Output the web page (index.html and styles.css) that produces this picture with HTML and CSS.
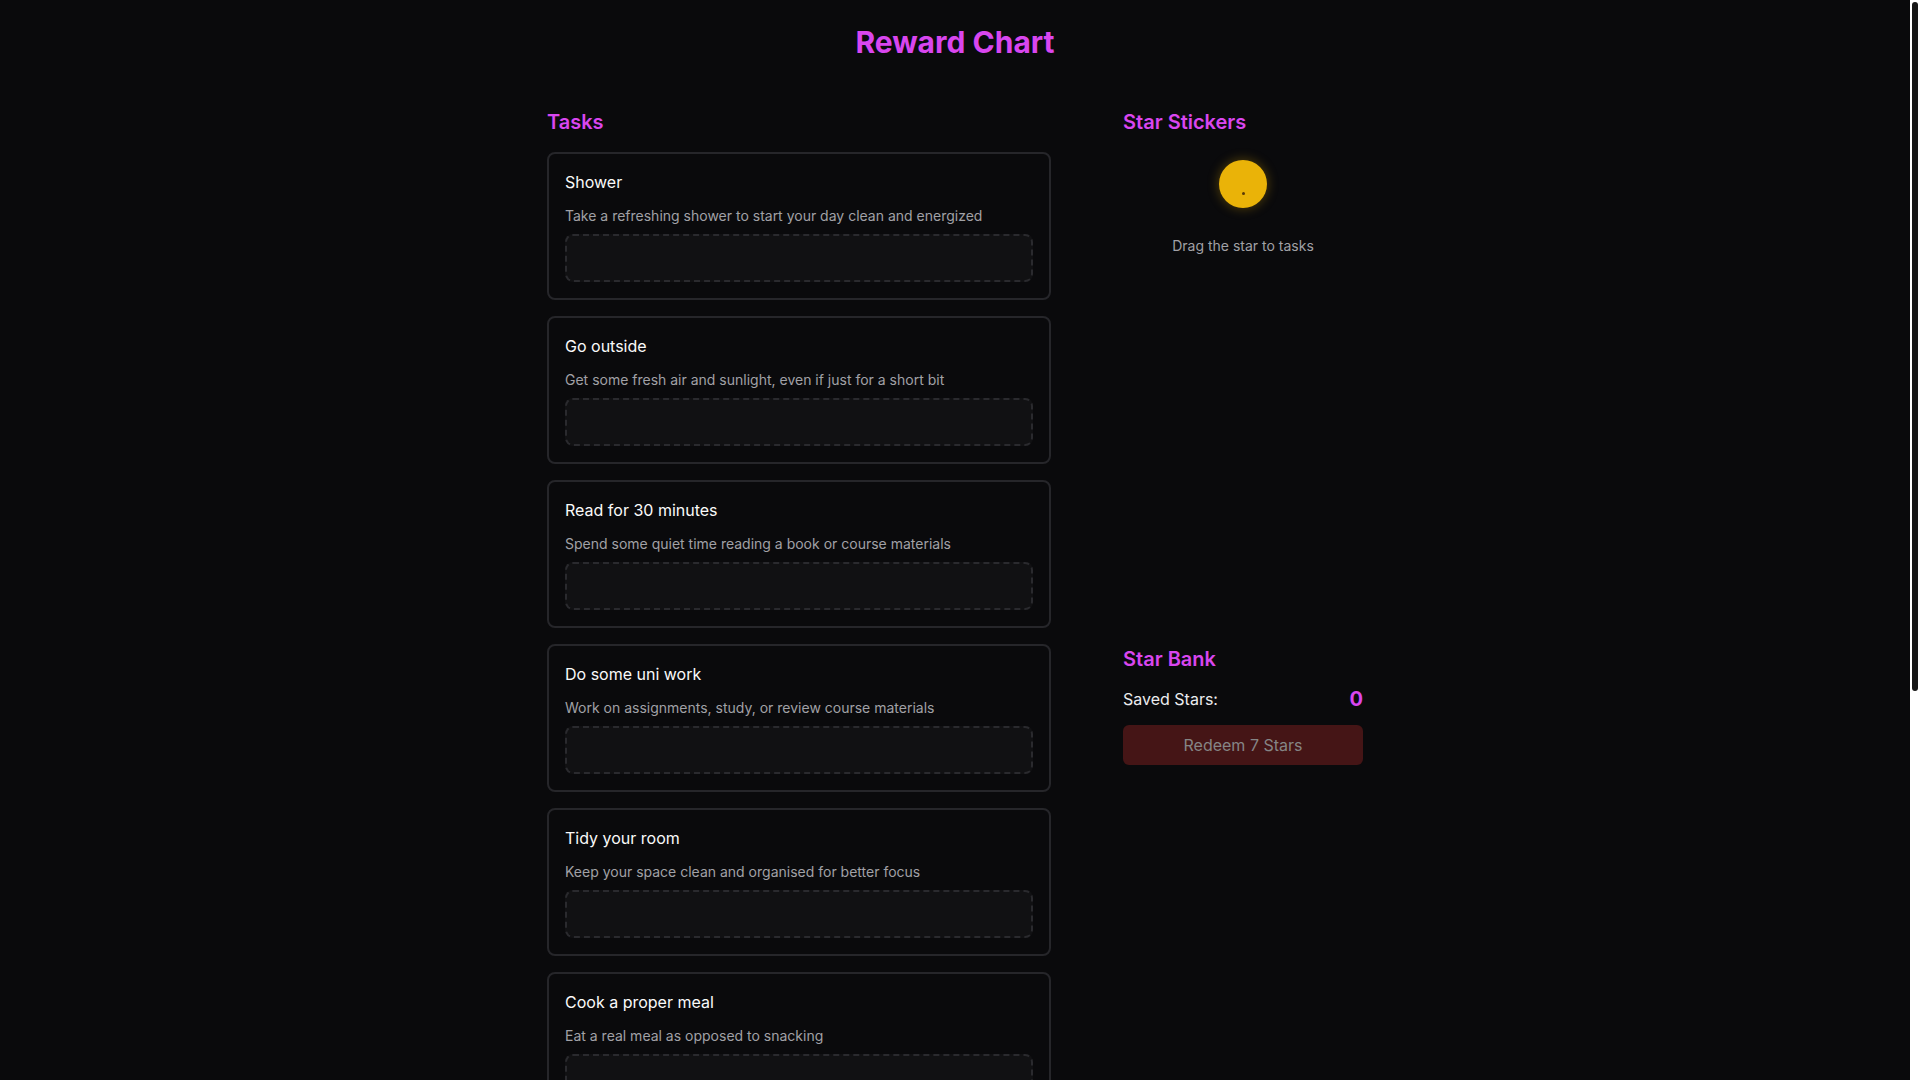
FILE: index.html
```html
<!DOCTYPE html>
<html lang="en">
<head>
<meta charset="utf-8">
<title>Reward Chart</title>
<link rel="stylesheet" href="styles.css">
</head>
<body>
<div class="page">
  <h1 class="page-title">Reward Chart</h1>
  <div class="layout">
    <section class="tasks">
      <h2 class="section-title">Tasks</h2>
      <div class="task-list">
        <div class="task-card">
          <h3 class="task-name">Shower</h3>
          <p class="task-desc">Take a refreshing shower to start your day clean and energized</p>
          <div class="drop-zone"></div>
        </div>
        <div class="task-card">
          <h3 class="task-name">Go outside</h3>
          <p class="task-desc">Get some fresh air and sunlight, even if just for a short bit</p>
          <div class="drop-zone"></div>
        </div>
        <div class="task-card">
          <h3 class="task-name">Read for 30 minutes</h3>
          <p class="task-desc">Spend some quiet time reading a book or course materials</p>
          <div class="drop-zone"></div>
        </div>
        <div class="task-card">
          <h3 class="task-name">Do some uni work</h3>
          <p class="task-desc">Work on assignments, study, or review course materials</p>
          <div class="drop-zone"></div>
        </div>
        <div class="task-card">
          <h3 class="task-name">Tidy your room</h3>
          <p class="task-desc">Keep your space clean and organised for better focus</p>
          <div class="drop-zone"></div>
        </div>
        <div class="task-card">
          <h3 class="task-name">Cook a proper meal</h3>
          <p class="task-desc">Eat a real meal as opposed to snacking</p>
          <div class="drop-zone"></div>
        </div>
        <div class="task-card">
          <h3 class="task-name">Drink water</h3>
          <p class="task-desc">Stay hydrated throughout the day</p>
          <div class="drop-zone"></div>
        </div>
        <div class="task-card">
          <h3 class="task-name">Exercise</h3>
          <p class="task-desc">Move your body for at least 20 minutes</p>
          <div class="drop-zone"></div>
        </div>
        <div class="task-card">
          <h3 class="task-name">Go to bed on time</h3>
          <p class="task-desc">Get a good night's sleep to recharge for tomorrow</p>
          <div class="drop-zone"></div>
        </div>
      </div>
    </section>
    <aside class="side">
      <h2 class="section-title">Star Stickers</h2>
      <div class="sticker-area">
        <div class="star"><span class="star-mark"></span></div>
        <p class="sticker-hint">Drag the star to tasks</p>
      </div>
      <div class="bank">
        <h2 class="bank-title">Star Bank</h2>
        <div class="bank-row">
          <span class="bank-label">Saved Stars:</span>
          <span class="bank-count">0</span>
        </div>
        <button class="redeem" disabled>Redeem 7 Stars</button>
      </div>
    </aside>
  </div>
</div>
<div class="scrollbar"><div class="scrollbar-thumb"></div></div>
</body>
</html>
```

FILE: styles.css
```css
* { box-sizing: border-box; }

html { background: #0a0a0c; }

body {
  margin: 0;
  padding-right: 10px;
  background: #0a0a0c;
  color: #fafafa;
  font-family: Inter, "Noto Sans", "Liberation Sans", sans-serif;
}

.scrollbar {
  position: fixed;
  top: 0;
  right: 0;
  width: 10px;
  height: 100vh;
  background: #ffffff;
}

.scrollbar-thumb {
  margin: 2px 2px 0;
  width: 6px;
  height: 689px;
  border-radius: 3px;
  background: #161616;
}

.page {
  max-width: 896px;
  margin: 0 auto;
  padding: 24px 40px 72px;
}

.page-title {
  margin: 0 0 48px;
  text-align: center;
  font-size: 30px;
  line-height: 36px;
  font-weight: 700;
  color: #d946ef;
}

.layout {
  display: grid;
  grid-template-columns: 1fr 240px;
  column-gap: 72px;
  align-items: start;
}

.section-title,
.bank-title {
  margin: 0 0 16px;
  font-size: 20px;
  line-height: 28px;
  font-weight: 600;
  color: #d946ef;
}

.bank-title { margin-bottom: 12px; }

.task-list {
  display: flex;
  flex-direction: column;
  gap: 16px;
}

.task-card {
  border: 2px solid #26262a;
  border-radius: 8px;
  padding: 16px;
  background: #0a0a0c;
}

.task-name {
  margin: 0 0 12px;
  font-size: 16px;
  line-height: 24px;
  font-weight: 400;
  color: #fafafa;
}

.task-desc {
  margin: 0 0 8px;
  font-size: 14px;
  line-height: 20px;
  color: #a1a1a6;
}

.drop-zone {
  height: 48px;
  border: 2px dashed #2a2a2e;
  border-radius: 8px;
  background: #111113;
}

.sticker-area {
  position: relative;
  min-height: 445px;
  padding-top: 8px;
  display: flex;
  flex-direction: column;
  align-items: center;
}

.sticker-area::after {
  content: "";
  position: absolute;
  left: -16px;
  right: -16px;
  bottom: 0;
  height: 2px;
  box-shadow: 0 0 10px 1px rgba(255, 255, 255, 0.025);
}

.star {
  position: relative;
  width: 48px;
  height: 48px;
  border-radius: 50%;
  background: #eab308;
  box-shadow: 0 0 12px rgba(234, 179, 8, 0.35);
}

.star-mark {
  position: absolute;
  left: 23px;
  top: 32px;
  width: 3px;
  height: 3px;
  border-radius: 50%;
  background: #5a3a08;
}

.sticker-hint {
  margin: 28px 0 0;
  font-size: 14px;
  line-height: 20px;
  color: #a1a1a6;
}

.bank { margin-top: 48px; }

.bank-row {
  display: flex;
  justify-content: space-between;
  align-items: center;
  height: 28px;
  margin-bottom: 12px;
}

.bank-label {
  font-size: 16px;
  line-height: 24px;
  font-weight: 400;
  color: #ececef;
}

.bank-count {
  font-size: 20px;
  line-height: 28px;
  font-weight: 700;
  color: #d946ef;
}

.redeem {
  display: block;
  width: 100%;
  height: 40px;
  border: 0;
  border-radius: 6px;
  background: #451516;
  color: #858585;
  font-family: inherit;
  font-size: 16px;
  font-weight: 400;
  cursor: not-allowed;
}
```
